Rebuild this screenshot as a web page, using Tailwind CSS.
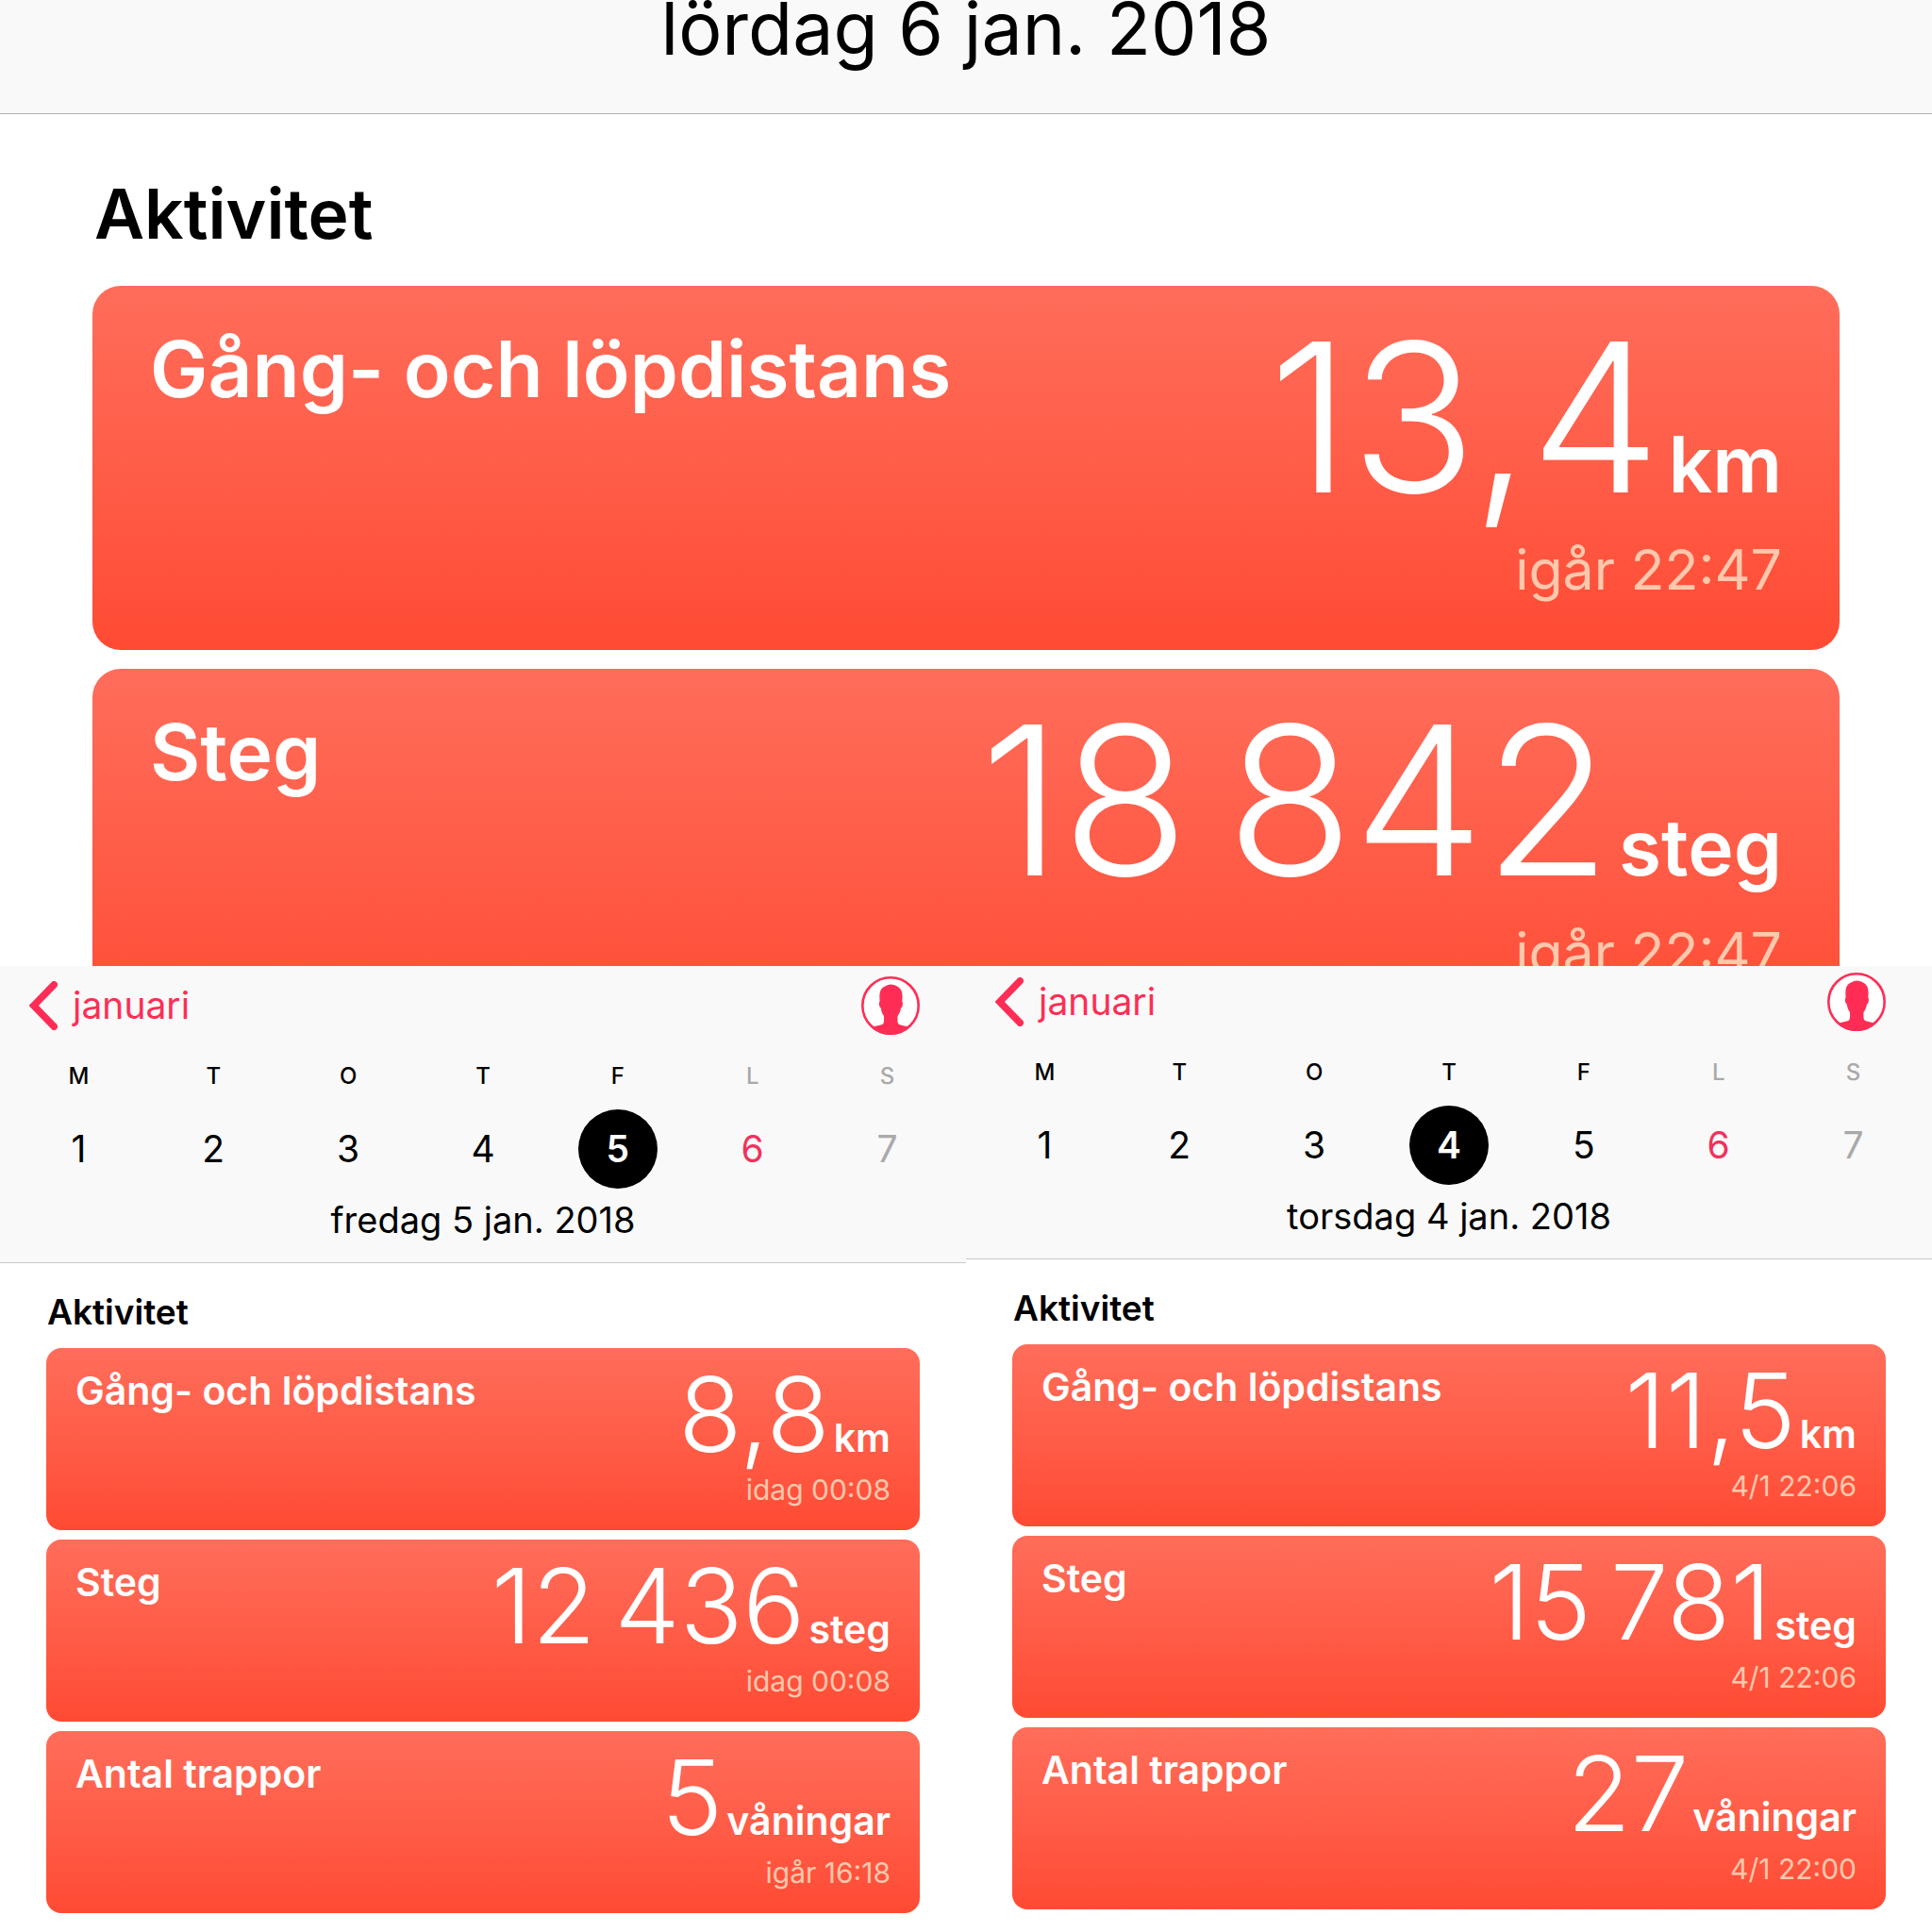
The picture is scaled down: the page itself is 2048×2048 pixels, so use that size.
<!DOCTYPE html>
<html lang="sv">
<head>
  <meta charset="UTF-8" />
  <meta name="viewport" content="width=device-width, initial-scale=1.0"/>
  <title>Aktivitet</title>
  <script src="https://cdn.jsdelivr.net/npm/@tailwindcss/browser@4"></script>
</head>
<body class="grid h-screen grid-cols-2 grid-rows-2 bg-white font-['Inter',sans-serif] text-black">

  <!-- Saturday, large -->
  <section class="col-span-2 min-h-0 overflow-hidden">
    <header class="border-b border-[#b0b0b0] bg-[#f9f9f9] pb-[60px] text-center text-[77px] leading-[60px]">
      lördag 6 jan. 2018
    </header>
    <div class="px-[98px] pt-[66px]">
      <h2 class="mb-9 pl-0.5 text-[73px] leading-[80px] font-semibold">Aktivitet</h2>
      <div class="space-y-5">
        <article class="flex h-[386px] justify-between rounded-[30px] bg-linear-to-b from-[#ff6d5a] to-[#ff4a33] px-[61px] pt-[39px] text-white">
          <h3 class="text-[82px] leading-[100px] font-semibold">Gång- och löpdistans</h3>
          <div class="text-right">
            <p class="flex items-baseline justify-end gap-2"><span class="text-[220px] leading-[200px] font-light">13,4</span><span class="text-[82px] leading-[96px] font-semibold">km</span></p>
            <p class="mt-[30px] text-[59px] leading-[64px] text-[#ffc8ad]">igår 22:47</p>
          </div>
        </article>
        <article class="flex h-[386px] justify-between rounded-[30px] bg-linear-to-b from-[#ff6d5a] to-[#ff4a33] px-[61px] pt-[39px] text-white">
          <h3 class="text-[82px] leading-[100px] font-semibold">Steg</h3>
          <div class="text-right">
            <p class="flex items-baseline justify-end gap-2"><span class="text-[220px] leading-[200px] font-light">18&thinsp;842</span><span class="text-[82px] leading-[96px] font-semibold">steg</span></p>
            <p class="mt-[30px] text-[59px] leading-[64px] text-[#ffc8ad]">igår 22:47</p>
          </div>
        </article>
      </div>
    </div>
  </section>

  <!-- Friday -->
  <section class="min-h-0 overflow-hidden">
    <header class="border-b border-[#c8c8c8] bg-[#f9f9f9] pt-[11px] pb-[21px]">
      <nav class="flex items-center justify-between pr-[49px] pl-[31px] text-[#ff2d55]">
        <a href="#" class="flex items-center gap-4 text-[39px] leading-[48px]">
          <svg class="h-[52px] w-[30px]" viewBox="0 0 30 52" fill="none" stroke="currentColor" stroke-width="7.500" stroke-linecap="round"><path d="M26.200 3.800L4.800 26L26.200 48.200"/></svg>
          januari
        </a>
        <button type="button" aria-label="Profil">
          <svg class="size-[62px]" viewBox="0 0 62 62"><circle cx="31" cy="31" r="29.700" fill="#fff" stroke="currentColor" stroke-width="2.600"/><path fill="currentColor" d="M11.500 54.500C15 52 21 52 23 50.500C24.500 49 24 45 24 42C22 39.500 21.200 36.500 20.800 33.500C19 33 18.200 28 19.600 26.500C18.800 18 20 12.500 24.500 11C26.500 9.500 29 8.800 31.500 8.500C35 8.800 37.500 10 39.500 11.500C43.500 14 44 19 43.300 26.500C44.600 28 43.800 33 42 33.500C41.500 36.500 40.500 39.500 38.500 42C38.500 45 38 49 39.500 50.500C41.500 52 47 52 50.500 54.500C39 64.500 23 64.500 11.500 54.500Z"/></svg>
        </button>
      </nav>
      <div class="mt-7 grid grid-cols-7 px-3 text-center text-[24px] leading-8 font-medium">
        <span>M</span><span>T</span><span>O</span><span>T</span><span>F</span><span class="text-[#a9a9a9]">L</span><span class="text-[#a9a9a9]">S</span>
      </div>
      <div class="mt-[19px] grid grid-cols-7 justify-items-center px-3 text-[39px] leading-[48px]">
        <button type="button" class="size-[84px]">1</button>
        <button type="button" class="size-[84px]">2</button>
        <button type="button" class="size-[84px]">3</button>
        <button type="button" class="size-[84px]">4</button>
        <button type="button" class="size-[84px] rounded-full bg-black font-semibold text-white">5</button>
        <button type="button" class="size-[84px] text-[#f0325c]">6</button>
        <button type="button" class="size-[84px] text-[#a9a9a9]">7</button>
      </div>
      <p class="mt-[9px] text-center text-[38px] leading-[48px]">fredag 5 jan. 2018</p>
    </header>
    <div class="px-[49px] pt-8">
      <h2 class="mb-[18px] pl-px text-[37px] leading-10 font-semibold">Aktivitet</h2>
      <div class="space-y-[10px]">
        <article class="flex h-[193px] justify-between rounded-2xl bg-linear-to-b from-[#ff6d5a] to-[#ff4a33] px-[31px] pt-5 text-white">
          <h3 class="text-[41px] leading-[50px] font-semibold">Gång- och löpdistans</h3>
          <div class="text-right">
            <p class="flex items-baseline justify-end gap-1"><span class="text-[110px] leading-[100px] font-light">8,8</span><span class="text-[41px] leading-[48px] font-semibold">km</span></p>
            <p class="mt-[14px] text-[30px] leading-8 text-[#ffc8ad]">idag 00:08</p>
          </div>
        </article>
        <article class="flex h-[193px] justify-between rounded-2xl bg-linear-to-b from-[#ff6d5a] to-[#ff4a33] px-[31px] pt-5 text-white">
          <h3 class="text-[41px] leading-[50px] font-semibold">Steg</h3>
          <div class="text-right">
            <p class="flex items-baseline justify-end gap-1"><span class="text-[110px] leading-[100px] font-light">12&thinsp;436</span><span class="text-[41px] leading-[48px] font-semibold">steg</span></p>
            <p class="mt-[14px] text-[30px] leading-8 text-[#ffc8ad]">idag 00:08</p>
          </div>
        </article>
        <article class="flex h-[193px] justify-between rounded-2xl bg-linear-to-b from-[#ff6d5a] to-[#ff4a33] px-[31px] pt-5 text-white">
          <h3 class="text-[41px] leading-[50px] font-semibold">Antal trappor</h3>
          <div class="text-right">
            <p class="flex items-baseline justify-end gap-1"><span class="text-[110px] leading-[100px] font-light">5</span><span class="text-[41px] leading-[48px] font-semibold">våningar</span></p>
            <p class="mt-[14px] text-[30px] leading-8 text-[#ffc8ad]">igår 16:18</p>
          </div>
        </article>
      </div>
    </div>
  </section>

  <!-- Thursday -->
  <section class="min-h-0 overflow-hidden">
    <header class="border-b border-[#c8c8c8] bg-[#f9f9f9] pt-[7px] pb-[21px]">
      <nav class="flex items-center justify-between pr-[49px] pl-[31px] text-[#ff2d55]">
        <a href="#" class="flex items-center gap-4 text-[39px] leading-[48px]">
          <svg class="h-[52px] w-[30px]" viewBox="0 0 30 52" fill="none" stroke="currentColor" stroke-width="7.500" stroke-linecap="round"><path d="M26.200 3.800L4.800 26L26.200 48.200"/></svg>
          januari
        </a>
        <button type="button" aria-label="Profil">
          <svg class="size-[62px]" viewBox="0 0 62 62"><circle cx="31" cy="31" r="29.700" fill="#fff" stroke="currentColor" stroke-width="2.600"/><path fill="currentColor" d="M11.500 54.500C15 52 21 52 23 50.500C24.500 49 24 45 24 42C22 39.500 21.200 36.500 20.800 33.500C19 33 18.200 28 19.600 26.500C18.800 18 20 12.500 24.500 11C26.500 9.500 29 8.800 31.500 8.500C35 8.800 37.500 10 39.500 11.500C43.500 14 44 19 43.300 26.500C44.600 28 43.800 33 42 33.500C41.500 36.500 40.500 39.500 38.500 42C38.500 45 38 49 39.500 50.500C41.500 52 47 52 50.500 54.500C39 64.500 23 64.500 11.500 54.500Z"/></svg>
        </button>
      </nav>
      <div class="mt-7 grid grid-cols-7 px-3 text-center text-[24px] leading-8 font-medium">
        <span>M</span><span>T</span><span>O</span><span>T</span><span>F</span><span class="text-[#a9a9a9]">L</span><span class="text-[#a9a9a9]">S</span>
      </div>
      <div class="mt-[19px] grid grid-cols-7 justify-items-center px-3 text-[39px] leading-[48px]">
        <button type="button" class="size-[84px]">1</button>
        <button type="button" class="size-[84px]">2</button>
        <button type="button" class="size-[84px]">3</button>
        <button type="button" class="size-[84px] rounded-full bg-black font-semibold text-white">4</button>
        <button type="button" class="size-[84px]">5</button>
        <button type="button" class="size-[84px] text-[#f0325c]">6</button>
        <button type="button" class="size-[84px] text-[#a9a9a9]">7</button>
      </div>
      <p class="mt-[9px] text-center text-[38px] leading-[48px]">torsdag 4 jan. 2018</p>
    </header>
    <div class="px-[49px] pt-8">
      <h2 class="mb-[18px] pl-px text-[37px] leading-10 font-semibold">Aktivitet</h2>
      <div class="space-y-[10px]">
        <article class="flex h-[193px] justify-between rounded-2xl bg-linear-to-b from-[#ff6d5a] to-[#ff4a33] px-[31px] pt-5 text-white">
          <h3 class="text-[41px] leading-[50px] font-semibold">Gång- och löpdistans</h3>
          <div class="text-right">
            <p class="flex items-baseline justify-end gap-1"><span class="text-[110px] leading-[100px] font-light">11,5</span><span class="text-[41px] leading-[48px] font-semibold">km</span></p>
            <p class="mt-[14px] text-[30px] leading-8 text-[#ffc8ad]">4/1 22:06</p>
          </div>
        </article>
        <article class="flex h-[193px] justify-between rounded-2xl bg-linear-to-b from-[#ff6d5a] to-[#ff4a33] px-[31px] pt-5 text-white">
          <h3 class="text-[41px] leading-[50px] font-semibold">Steg</h3>
          <div class="text-right">
            <p class="flex items-baseline justify-end gap-1"><span class="text-[110px] leading-[100px] font-light">15&thinsp;781</span><span class="text-[41px] leading-[48px] font-semibold">steg</span></p>
            <p class="mt-[14px] text-[30px] leading-8 text-[#ffc8ad]">4/1 22:06</p>
          </div>
        </article>
        <article class="flex h-[193px] justify-between rounded-2xl bg-linear-to-b from-[#ff6d5a] to-[#ff4a33] px-[31px] pt-5 text-white">
          <h3 class="text-[41px] leading-[50px] font-semibold">Antal trappor</h3>
          <div class="text-right">
            <p class="flex items-baseline justify-end gap-1"><span class="text-[110px] leading-[100px] font-light">27</span><span class="text-[41px] leading-[48px] font-semibold">våningar</span></p>
            <p class="mt-[14px] text-[30px] leading-8 text-[#ffc8ad]">4/1 22:00</p>
          </div>
        </article>
      </div>
    </div>
  </section>

</body>
</html>
